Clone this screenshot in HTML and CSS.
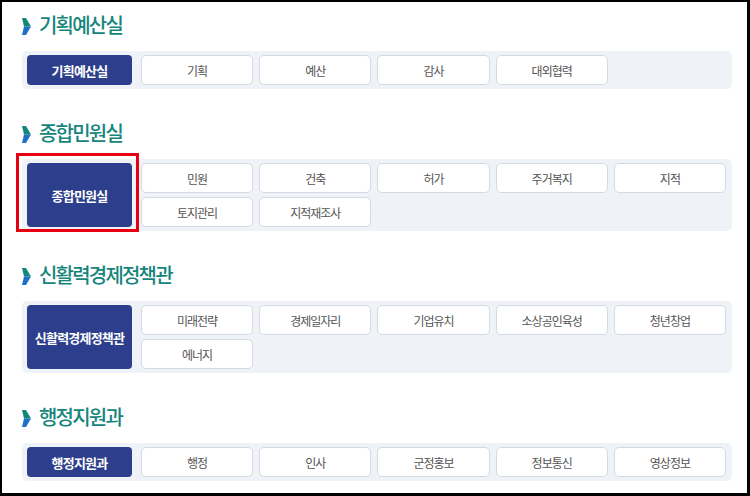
FILE: index.html
```html
<!DOCTYPE html>
<html lang="ko">
<head>
    <meta charset="UTF-8">
    <meta name="viewport" content="width=device-width, initial-scale=1.0">
    <title>조직도</title>
    <link rel="stylesheet" href="styles.css">
</head>
<body>
<div class="frame">
<div class="wrap">
    <section>
        <h2><svg class="arr" viewBox="0 0 9 17"><polygon points="0,0 4,0 9,8.5 2,8.5" fill="#12877c"/><polygon points="2,8.5 9,8.5 4,17 0,17" fill="#1f6fc4"/></svg>기획예산실</h2>
        <div class="dept">
            <a class="main">기획예산실</a>
            <ul class="team">
                <li>기획</li>
                <li>예산</li>
                <li>감사</li>
                <li>대외협력</li>
            </ul>
        </div>
    </section>

    <section>
        <h2><svg class="arr" viewBox="0 0 9 17"><polygon points="0,0 4,0 9,8.5 2,8.5" fill="#12877c"/><polygon points="2,8.5 9,8.5 4,17 0,17" fill="#1f6fc4"/></svg>종합민원실</h2>
        <div class="dept">
            <a class="main">종합민원실</a>
            <ul class="team">
                <li>민원</li>
                <li>건축</li>
                <li>허가</li>
                <li>주거복지</li>
                <li>지적</li>
                <li>토지관리</li>
                <li>지적재조사</li>
            </ul>
            <span class="mark"></span>
        </div>
    </section>

    <section>
        <h2><svg class="arr" viewBox="0 0 9 17"><polygon points="0,0 4,0 9,8.5 2,8.5" fill="#12877c"/><polygon points="2,8.5 9,8.5 4,17 0,17" fill="#1f6fc4"/></svg>신활력경제정책관</h2>
        <div class="dept">
            <a class="main">신활력경제정책관</a>
            <ul class="team">
                <li>미래전략</li>
                <li>경제일자리</li>
                <li>기업유치</li>
                <li>소상공인육성</li>
                <li>청년창업</li>
                <li>에너지</li>
            </ul>
        </div>
    </section>

    <section>
        <h2><svg class="arr" viewBox="0 0 9 17"><polygon points="0,0 4,0 9,8.5 2,8.5" fill="#12877c"/><polygon points="2,8.5 9,8.5 4,17 0,17" fill="#1f6fc4"/></svg>행정지원과</h2>
        <div class="dept">
            <a class="main">행정지원과</a>
            <ul class="team">
                <li>행정</li>
                <li>인사</li>
                <li>군정홍보</li>
                <li>정보통신</li>
                <li>영상정보</li>
            </ul>
        </div>
    </section>
</div>
</div>
</body>
</html>
```

FILE: styles.css
```css
body {margin: 0; font-family: "Noto Sans CJK KR", "Noto Sans", sans-serif;}
.frame {width: 750px; height: 496px; box-sizing: border-box; border: solid #000; border-width: 2px 3px 3px 2px; overflow: hidden;}
.wrap {padding: 11px 15px 0 20px;}
section {margin-top: 32px;}
section:first-child {margin-top: 0;}

h2 {display: flex; align-items: center; height: 24px; margin: 0 0 14px; font-size: 20px; font-weight: 500; line-height: 24px; letter-spacing: -1.8px; color: #15857c;}
h2 .arr {display: block; width: 9px; height: 17px; margin: 3px 8px 0 0; flex: none;}

.dept {position: relative; display: flex; gap: 9px; padding: 4px 6px 4px 5px; background: #eff2f6; border-radius: 5px;}
.dept .main {display: flex; align-items: center; justify-content: center; width: 105px; flex: none; background: #2d3f8c; border-radius: 4px; color: #fff; font-size: 13px; font-weight: 700; letter-spacing: -0.8px;}
.team {flex: 1; display: grid; grid-template-columns: repeat(5, 1fr); grid-auto-rows: 30px; gap: 4px 6px; margin: 0; padding: 0; list-style: none;}
.team li {display: flex; align-items: center; justify-content: center; box-sizing: border-box; background: #fff; border: 1px solid #d3dae3; border-radius: 5px; font-size: 12px; letter-spacing: -1px; color: #555;}

.mark {position: absolute; left: -6px; top: -6px; width: 123px; height: 79px; box-sizing: border-box; border: 3px solid #e60012;}
```
